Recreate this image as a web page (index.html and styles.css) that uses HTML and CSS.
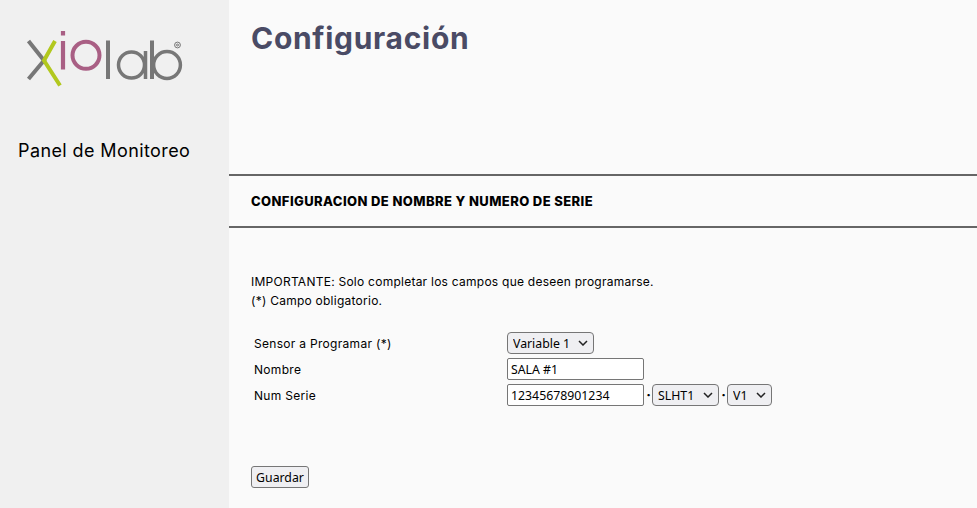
FILE: index.html
```html
<!DOCTYPE html>
<html lang="es">
<head>
<meta charset="utf-8">
<title>Configuración</title>
<link rel="stylesheet" href="styles.css">
</head>
<body>
<div class="layout">
  <aside class="sidebar">
    <svg class="logo" width="229" height="100" viewBox="0 0 229 100" role="img" aria-label="xiolab">
      <g fill="none" stroke-width="4">
        <path d="M28.5 41 L44 60.5 L28.5 79" stroke="#777"/>
        <path d="M55 41 L44 60.5 L60 85.5" stroke="#b2c81e"/>
        <path d="M63 41 V69.5" stroke="#a95f84" stroke-width="4.2"/>
        <path d="M63 31 V35.5" stroke="#a95f84" stroke-width="4.2"/>
        <circle cx="86" cy="55.3" r="13.5" stroke="#a95f84" stroke-width="4"/>
        <path d="M108 40.5 V79" stroke="#777" stroke-width="4"/>
        <circle cx="131.5" cy="65" r="13" stroke="#777" stroke-width="3.5"/>
        <path d="M145.5 51 V79" stroke="#777" stroke-width="3.5"/>
        <path d="M152 40.5 V79" stroke="#777" stroke-width="4"/>
        <circle cx="167" cy="65" r="13.4" stroke="#777" stroke-width="3.5"/>
        <circle cx="177.5" cy="45" r="2.9" stroke="#777" stroke-width="1"/>
        <circle cx="177.5" cy="45" r="1" stroke="#777" stroke-width="1"/>
      </g>
    </svg>
    <p class="panel-title">Panel de Monitoreo</p>
  </aside>
  <main class="content">
    <header class="page-head">
      <h1>Configuración</h1>
    </header>
    <section class="section-bar">
      <h2>CONFIGURACION DE NOMBRE Y NUMERO DE SERIE</h2>
    </section>
    <form class="config-form">
      <p class="note">IMPORTANTE: Solo completar los campos que deseen programarse.<br>(*) Campo obligatorio.</p>
      <div class="fields">
        <label class="field-label" for="sensor">Sensor a Programar (*)</label>
        <div class="field-ctrl">
          <select id="sensor" class="sel-sensor"><option>Variable 1</option></select>
        </div>
        <label class="field-label" for="nombre">Nombre</label>
        <div class="field-ctrl">
          <input id="nombre" type="text" value="SALA #1">
        </div>
        <label class="field-label" for="serie">Num Serie</label>
        <div class="field-ctrl">
          <input id="serie" type="text" value="12345678901234">
          <span class="dot">·</span>
          <select class="sel-model"><option>SLHT1</option></select>
          <span class="dot">·</span>
          <select class="sel-version"><option>V1</option></select>
        </div>
      </div>
      <button type="button" class="save">Guardar</button>
    </form>
  </main>
</div>
</body>
</html>
```

FILE: styles.css
```css
html, body {
  margin: 0;
  height: 100%;
  overflow: hidden;
}
body {
  background: #fafafa;
  color: #000;
  font-family: "Inter", "Liberation Sans", sans-serif;
}
.layout {
  display: flex;
  height: 508px;
}
.sidebar {
  width: 229px;
  flex: none;
  background: #f0f0f0;
}
.logo {
  display: block;
}
.panel-title {
  margin: 38px 0 0 18px;
  font-size: 18px;
  line-height: 26px;
  letter-spacing: 0.4px;
}
.content {
  flex: 1;
  min-width: 0;
}
.page-head {
  height: 174px;
  padding: 20px 22px 0;
  box-sizing: border-box;
}
h1 {
  margin: 0;
  font-size: 30px;
  line-height: 36px;
  font-weight: 700;
  letter-spacing: 0.7px;
  color: #4a4b65;
}
.section-bar {
  height: 50px;
  display: flex;
  align-items: center;
  padding-left: 22px;
  border-top: 2px solid #666;
  border-bottom: 2px solid #666;
}
h2 {
  margin: 0;
  font-size: 13px;
  font-weight: 800;
  letter-spacing: 0.4px;
}
.config-form {
  padding: 44px 22px 0;
}
.note {
  margin: 0;
  font-size: 12px;
  line-height: 19px;
  letter-spacing: 0.25px;
}
.fields {
  display: grid;
  grid-template-columns: 256px auto;
  grid-auto-rows: 26px;
  margin-top: 20px;
  align-items: center;
}
.field-label {
  padding-left: 3px;
  font-size: 12px;
  letter-spacing: 0.3px;
}
.field-ctrl {
  display: flex;
  align-items: center;
}
select, input, .save {
  font-family: "Noto Sans", sans-serif;
  font-size: 12.3px;
  box-sizing: border-box;
  color: #000;
}
select {
  appearance: none;
  height: 22px;
  padding: 0 0 0 5px;
  background-color: #efeff2;
  background-image: url("data:image/svg+xml,%3Csvg xmlns='http://www.w3.org/2000/svg' width='10' height='6'%3E%3Cpath d='M1 1l4 4 4-4' fill='none' stroke='%23222' stroke-width='1.5'/%3E%3C/svg%3E");
  background-repeat: no-repeat;
  background-position: right 5px center;
  border: 1px solid #767676;
  border-radius: 4px;
}
.sel-sensor {
  width: 87px;
}
.sel-model {
  width: 67px;
}
.sel-version {
  width: 45px;
}
input {
  width: 137px;
  height: 22px;
  padding: 1px 3px;
  border: 1px solid #767676;
  border-radius: 2px;
  background: #fff;
}
.dot {
  width: 8px;
  padding-left: 1px;
  box-sizing: border-box;
  text-align: center;
  font-size: 14px;
  font-weight: 700;
  line-height: 14px;
}
.save {
  display: block;
  margin-top: 58px;
  width: 58px;
  height: 22px;
  padding: 0;
  background: #efeff2;
  border: 1px solid #767676;
  border-radius: 3px;
}
```
